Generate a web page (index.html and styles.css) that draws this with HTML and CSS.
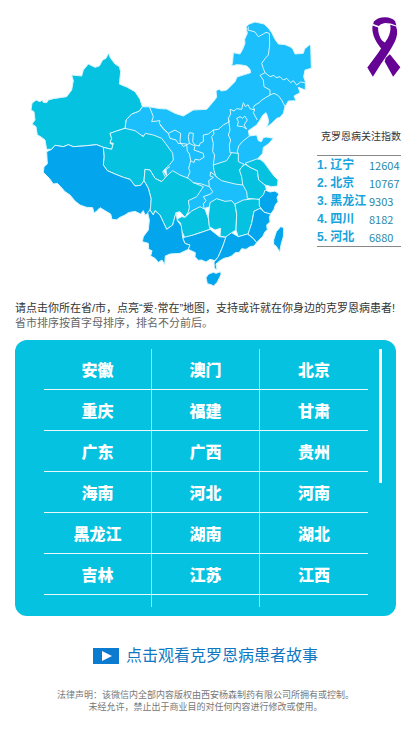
FILE: index.html
```html
<!DOCTYPE html>
<html lang="zh-CN">
<head>
<meta charset="utf-8">
<meta name="viewport" content="width=device-width, initial-scale=1">
<title>克罗恩病关注指数</title>
<link rel="stylesheet" href="styles.css">
</head>
<body>
<header class="hero">
  <svg class="map" viewBox="0 0 891 840" role="img" aria-label="中国地图">
    <path class="north" d="M367 290 385 290 420 296 440 297 465 310 490 318 520 300 560 298 580 275 590 262 588 242 597 238 605 243 620 240 645 215 651 201 670 195 692 188 690 178 680 168 665 165 650 164 635 168 638 155 640 128 660 132 668 118 675 100 674 88 682 70 678 50 688 42 705 36 732 42 745 54 755 68 765 88 775 102 795 104 810 110 818 116 825 132 850 130 854 116 860 112 868 105 872 107 874 175 855 180 851 200 856 215 856 240 835 232 840 248 822 258 828 272 805 273 795 290 790 310 780 322 770 325 755 340 740 352 746 335 743 320 738 308 728 316 720 330 710 345 685 362 688 378 710 375 715 392 724 395 730 383 738 381 760 385 745 402 730 412 728 430 710 450 735 525 718 566 645 590 570 590 505 610 440 500 430 400 315 358 318 330 335 312 358 303Z"/>
    <path class="mid" d="M265 130 272 145 285 162 298 170 302 185 298 222 322 232 345 245 360 268 367 290 358 303 335 312 318 330 315 355 290 363 270 370 275 385 270 400 280 405 275 418 250 412 230 404 190 408 160 410 145 404 130 410 105 406 95 418 80 418 75 390 62 380 52 375 48 350 36 342 45 330 42 305 33 300 36 280 48 270 60 275 66 270 70 277 80 278 85 270 100 266 140 260 155 240 160 212 155 195 185 198 190 180 205 162 225 172 238 168 248 150 258 145Z"/>
    <path class="mid" d="M315 355 345 362 370 380 376 370 400 375 425 385 440 405 458 430 460 450 448 465 430 482 440 498 425 515 405 505 390 480 375 478 372 512 362 526 345 528 330 508 310 502 285 492 262 482 250 465 252 440 250 412 275 418 280 400 270 398 275 385 270 370 290 363Z"/>
    <path class="mid" d="M372 512 375 478 390 480 405 505 425 515 440 498 458 482 480 495 505 505 520 518 550 530 530 560 505 572 508 592 505 605 495 622 480 605 468 608 458 645 440 658 420 615 405 602 400 615 390 600 393 565 385 535Z"/>
    <path class="mid" d="M495 622 515 603 540 590 555 598 565 625 570 658 550 665 520 675 495 685 484 660 482 640 470 628 485 620Z"/>
    <path class="mid" d="M570 578 590 566 615 574 635 572 645 584 650 612 648 660 635 668 618 682 600 678 602 655 585 660 568 650 565 620 568 595Z"/>
    <path class="mid" d="M645 582 670 570 710 565 720 572 722 596 702 604 695 640 685 672 655 680 648 660 650 612Z"/>
    <path class="mid" d="M660 475 675 463 690 472 712 482 716 508 735 525 740 540 730 555 718 568 682 565 680 545 667 522 657 500Z"/>
    <path class="mid" d="M675 460 710 447 720 448 732 457 740 468 750 482 762 498 774 510 772 528 755 530 735 525 716 510 712 482 690 472Z"/>
    <path class="mid" d="M580 465 620 452 635 428 655 430 655 455 672 463 658 480 665 500 668 525 645 522 605 512 588 500 582 482Z"/>
    <path class="south" d="M95 418 105 406 130 410 145 404 160 410 190 408 230 404 250 412 252 440 250 465 262 482 285 492 310 502 330 508 345 528 362 526 372 512 385 535 393 565 392 590 388 608 375 615 370 602 362 612 345 604 325 608 315 615 300 622 290 629 276 628 272 612 255 602 240 593 228 605 222 609 218 593 200 592 180 585 165 573 150 555 135 545 122 530 112 520 100 522 88 505 70 487 72 470 82 462 80 425Z"/>
    <path class="south" d="M390 600 400 615 405 602 420 615 440 658 458 645 468 608 472 632 484 648 488 682 495 700 510 705 505 718 480 730 450 732 436 738 434 764 426 750 415 757 405 745 392 738 396 722 386 718 385 700 367 695 370 680 385 660 388 630 383 608Z"/>
    <path class="south" d="M488 683 520 675 550 665 570 658 598 680 618 682 608 710 595 740 585 752 570 748 558 756 545 750 535 751 525 740 526 728 505 718 510 705 495 700Z"/>
    <path class="south" d="M618 680 635 668 655 680 682 672 700 685 710 698 702 708 690 710 678 718 665 716 658 727 645 728 635 738 625 742 612 745 600 752 588 762 591 780 583 774 582 756 595 740 608 710Z"/>
    <path class="south" d="M720 595 732 606 752 612 748 622 750 635 740 645 742 660 735 665 728 680 722 685 710 698 700 685 684 672 695 640 702 604Z"/>
    <path class="south" d="M735 540 750 546 765 543 777 552 771 562 774 575 766 585 762 598 752 612 732 606 718 588 718 566 730 555Z"/>
    <path class="south" d="M566 792 580 787 588 790 602 785 603 793 599 802 591 818 580 828 574 824 562 821 558 803Z"/>
    <path class="south" d="M782 650 791 653 790 680 784 700 779 726 769 709 761 703 761 690 769 665Z"/>
    <path class="border" d="M685 50 684 60 705 66 715 80 730 72 738 67 748 70 749 105 745 135 735 146 725 160 730 176 735 188 720 196 730 210 732 230 750 240 750 255 735 264 725 270 718 278 705 285 700 292 704 300 690 296 684 284 676 290 670 278 665 298 650 296 642 303 630 298 632 312 625 325 628 335 610 345 595 358 580 360 565 372 550 375 550 395 540 400 538 408 525 405 518 395 520 370 508 368 505 380 508 400 490 410 480 395 482 370 465 360 445 370 435 362 420 345"/>
    <path class="border" d="M735 188 750 200 762 196 768 203 780 200 790 210 800 205 812 218 820 212 830 225 842 216 855 218M750 255 762 250 775 257 785 270 795 290M704 300 700 308 705 318 712 330M650 325 660 320 668 325 674 318 682 330 672 345 680 357 668 350 652 348 655 335ZM625 325 630 360 625 375 632 390 628 405 630 428 635 428M580 360 582 372 575 380 580 400 578 425 584 435 580 465M688 378 668 394 656 408 652 425 655 432"/>
    <path class="border" d="M372 290 388 290 400 320 395 335 420 332 418 340 430 355 445 370 450 385 468 390 474 400 500 402 502 425 508 430 512 452M508 400 525 408 522 420 550 430 552 442 538 450 525 448 522 458 512 452 506 475 510 485 502 505M520 518 545 522 568 530 566 512 580 502 570 498 572 486 590 500M568 530 578 545 572 552 550 560 558 572 550 582 552 595M435 500 428 485 450 470"/>
  </svg>
  <aside class="index">
    <svg class="ribbon" viewBox="172 17 104 186" role="img" aria-label="紫丝带">
      <path d="M193 32Q205 19 227 19 249 20 258 31L262 44Q241 36 224 37 213 39 208 46L191 40Z"/>
      <path d="M189 44 206 50Q205 72 218 90L242 108 232 130Q207 109 197 87 186 64 189 44ZM229 144 242 132 274 172 252 201 226 154Z"/>
      <path d="M243 42 261 47Q269 67 257 94 243 122 214 163L190 201 173 173Q208 128 235 84 247 62 243 42Z"/>
    </svg>
    <table class="ranking">
      <caption>克罗恩病关注指数</caption>
      <tbody>
        <tr><th scope="row">1. 辽宁</th><td>12604</td></tr>
        <tr><th scope="row">2. 北京</th><td>10767</td></tr>
        <tr><th scope="row">3. 黑龙江</th><td>9303</td></tr>
        <tr><th scope="row">4. 四川</th><td>8182</td></tr>
        <tr><th scope="row">5. 河北</th><td>6880</td></tr>
      </tbody>
    </table>
  </aside>
</header>
<main>
  <div class="intro">
    <p>请点击你所在省/市，点亮“爱·常在”地图，支持或许就在你身边的克罗恩病患者!</p>
    <p class="note">省市排序按首字母排序，排名不分前后。</p>
  </div>
  <section class="panel" aria-label="省市">
    <div class="grid">
      <button>安徽</button><button>澳门</button><button>北京</button>
      <button>重庆</button><button>福建</button><button>甘肃</button>
      <button>广东</button><button>广西</button><button>贵州</button>
      <button>海南</button><button>河北</button><button>河南</button>
      <button>黑龙江</button><button>湖南</button><button>湖北</button>
      <button>吉林</button><button>江苏</button><button>江西</button>
      <span class="stub"></span><span class="stub"></span><span class="stub"></span>
    </div>
    <div class="track"><div class="thumb"></div></div>
  </section>
  <a class="video" href="#">
    <svg class="play" viewBox="0 0 26 16" aria-hidden="true"><path class="plate" d="M0 0H26V16H0Z"/><path class="arrow" d="M9 3 19 8 9 13Z"/></svg>
    <span>点击观看克罗恩病患者故事</span>
  </a>
</main>
<footer class="legal">
  <p>法律声明：该微信内全部内容版权由西安杨森制药有限公司所拥有或控制。</p>
  <p>未经允许，禁止出于商业目的对任何内容进行修改或使用。</p>
</footer>
</body>
</html>
```
FILE: styles.css
```css
* { box-sizing: border-box; }

body {
  margin: 0;
  background: #fff;
  color: #333;
  font-family: "Liberation Sans", "Noto Sans CJK SC", sans-serif;
  font-size: 11px;
}

p { margin: 0; }

.hero {
  display: flex;
  padding: 10px 10px 0 20px;
}

.map {
  flex: 1;
  min-width: 0;
}

.map path {
  stroke: #d8f5fd;
  stroke-width: 3;
  stroke-linejoin: round;
}

.north { fill: #1abffb; }
.mid { fill: #06c2e1; }
.south { fill: #03a6ec; }
.map .border { fill: none; }

.index {
  width: 84px;
  display: flex;
  flex-direction: column;
  align-items: flex-end;
}

.ribbon {
  width: 34px;
  height: 62px;
  margin: 6px 0 50px;
  fill: #640394;
}

.ranking {
  width: 100%;
  border-collapse: collapse;
  table-layout: fixed;
  line-height: 18px;
}

.ranking caption {
  padding-bottom: 9px;
  font-size: 10px;
  text-align: right;
  white-space: nowrap;
}

.ranking tbody {
  border-top: 1px solid #888;
  border-bottom: 1px solid #888;
}

.ranking th,
.ranking td {
  height: 18px;
  padding: 0;
  text-align: left;
  white-space: nowrap;
}

.ranking th {
  width: 52px;
  color: #17a3dc;
  font-size: 12px;
}

.ranking td {
  color: #2989a8;
  font-family: "Noto Sans CJK SC", sans-serif;
  font-size: 11px;
}

.intro {
  padding: 11px 0 0 15px;
  line-height: 15px;
  white-space: nowrap;
}

.note { color: #666; }

.panel {
  display: flex;
  margin: 9px 15px 0;
  padding: 9px 14px 9px 29px;
  border-radius: 12px;
  background: #06c2e1;
}

.grid {
  flex: 1;
  display: grid;
  grid-template-columns: repeat(3, 1fr);
}

.grid button {
  height: 41px;
  padding: 0;
  border: 0;
  border-right: 1px solid #9be7f3;
  border-bottom: 1px solid #e6fafd;
  background: none;
  color: #fff;
  font: 900 16px "Noto Sans CJK SC", sans-serif;
}

.stub {
  height: 12px;
  border-right: 1px solid #9be7f3;
}

.grid > :nth-child(3n) { border-right: 0; }

.track {
  width: 3px;
  margin-left: 11px;
}

.thumb {
  height: 52%;
  background: #fff;
}

.video {
  display: flex;
  justify-content: center;
  align-items: center;
  gap: 7px;
  margin-top: 28px;
  color: #1077c2;
  font-size: 16px;
  line-height: 24px;
  text-decoration: none;
}

.play {
  width: 26px;
  height: 16px;
}

.plate { fill: #0b7bd0; }
.arrow { fill: #fff; }

.legal {
  padding: 21px 0;
  color: #777;
  font-size: 9px;
  line-height: 12px;
  text-align: center;
}
```
